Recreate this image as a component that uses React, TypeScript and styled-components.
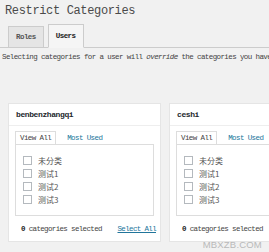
import React from 'react'
import styled, { createGlobalStyle } from 'styled-components'

const GlobalStyle = createGlobalStyle`
  html, body {
    margin: 0;
    padding: 0;
    background: #f1f1f1;
    overflow: hidden;
  }
  body {
    font-family: "Liberation Mono", "Noto Sans CJK SC", monospace;
    color: #444;
  }
`

const Page = styled.div`
  position: relative;
  width: 269px;
  height: 252px;
  padding-top: 3px;
  box-sizing: border-box;
  overflow: hidden;
`

const Title = styled.h1`
  margin: 0 0 0 5px;
  font-size: 12px;
  font-weight: normal;
  letter-spacing: -0.35px;
  line-height: 16px;
  color: #4a4a4a;
  white-space: nowrap;
`

const NavTabs = styled.div`
  display: flex;
  align-items: flex-end;
  gap: 4px;
  height: 22px;
  margin-top: 6px;
  padding-left: 8px;
  border-bottom: 1px solid #ccc;
`

const NavTab = styled.div<{ $active?: boolean }>`
  box-sizing: border-box;
  height: ${p => (p.$active ? '24px' : '21px')};
  margin-bottom: ${p => (p.$active ? '-1px' : '0')};
  padding: 0 7px;
  border: 1px solid #ccc;
  border-bottom: ${p => (p.$active ? '1px solid #f5f5f5' : 'none')};
  background: ${p => (p.$active ? '#f5f5f5' : '#e5e5e5')};
  color: ${p => (p.$active ? '#222' : '#555')};
  font-size: 7.5px;
  font-weight: bold;
  letter-spacing: -0.55px;
  line-height: ${p => (p.$active ? '22px' : '20px')};
`

const Description = styled.p`
  margin: 4px 0 0 2px;
  font-size: 7.5px;
  letter-spacing: -0.6px;
  line-height: 10px;
  color: #444;
  white-space: nowrap;

  em {
    font-style: italic;
  }
`

const Columns = styled.div`
  display: flex;
  gap: 8px;
  margin-top: 41px;
  padding-left: 8px;
`

const Box = styled.div`
  flex-shrink: 0;
  width: 153px;
  box-sizing: border-box;
  background: #fff;
  border: 1px solid #e5e5e5;
`

const BoxHeader = styled.div`
  height: 21px;
  padding: 0 7px;
  border-bottom: 1px solid #eee;
  font-size: 8px;
  font-weight: bold;
  letter-spacing: -0.4px;
  line-height: 21px;
  color: #23282d;
`

const BoxBody = styled.div`
  padding: 5px 6px 0;
`

const CatTabs = styled.div`
  display: flex;
  height: 13px;
  align-items: stretch;
`

const CatTab = styled.div<{ $active?: boolean }>`
  padding: 0 4px;
  margin-right: ${p => (p.$active ? '6px' : '0')};
  border: 1px solid ${p => (p.$active ? '#ddd' : 'transparent')};
  border-bottom: none;
  background: ${p => (p.$active ? '#fff' : 'transparent')};
  color: ${p => (p.$active ? '#444' : '#21759b')};
  font-size: 7.5px;
  letter-spacing: -0.6px;
  line-height: 12px;
`

const CatList = styled.div`
  box-sizing: border-box;
  height: 72px;
  padding: 9px 0 0 7px;
  border: 1px solid #ddd;
`

const CatItem = styled.label`
  display: flex;
  align-items: center;
  gap: 6px;
  height: 13px;
  font-family: "Noto Sans CJK SC", sans-serif;
  font-size: 8px;
  color: #555;
`

const Check = styled.span`
  width: 9px;
  height: 9px;
  box-sizing: border-box;
  border: 1px solid #b4b9be;
  background: #fff;
`

const Footer = styled.div`
  display: flex;
  align-items: center;
  justify-content: space-between;
  height: 25px;
  padding: 0 4px 0 12px;
  font-size: 7.5px;
  letter-spacing: -0.65px;
  color: #444;
  white-space: nowrap;

  b {
    color: #222;
  }
`

const SelectAll = styled.a`
  color: #21759b;
  text-decoration: underline;
`

const Watermark = styled.div`
  position: absolute;
  right: 7px;
  bottom: 2px;
  font-family: "Liberation Sans", sans-serif;
  font-size: 9.5px;
  color: #b9b9b9;
  letter-spacing: 0.2px;
`

const categories = ['未分类', '测试1', '测试2', '测试3']

function CategoryBox({ user }: { user: string }) {
  return (
    <Box>
      <BoxHeader>{user}</BoxHeader>
      <BoxBody>
        <CatTabs>
          <CatTab $active>View All</CatTab>
          <CatTab>Most Used</CatTab>
        </CatTabs>
        <CatList>
          {categories.map(c => (
            <CatItem key={c}>
              <Check />
              {c}
            </CatItem>
          ))}
        </CatList>
      </BoxBody>
      <Footer>
        <span>
          <b>0</b> categories selected
        </span>
        <SelectAll>Select All</SelectAll>
      </Footer>
    </Box>
  )
}

export default function App() {
  return (
    <Page>
      <GlobalStyle />
      <Title>Restrict Categories</Title>
      <NavTabs>
        <NavTab>Roles</NavTab>
        <NavTab $active>Users</NavTab>
      </NavTabs>
      <Description>
        Selecting categories for a user will <em>override</em> the categories you have
      </Description>
      <Columns>
        <CategoryBox user="benbenzhangqi" />
        <CategoryBox user="ceshi" />
      </Columns>
      <Watermark>MBXZB.COM</Watermark>
    </Page>
  )
}
